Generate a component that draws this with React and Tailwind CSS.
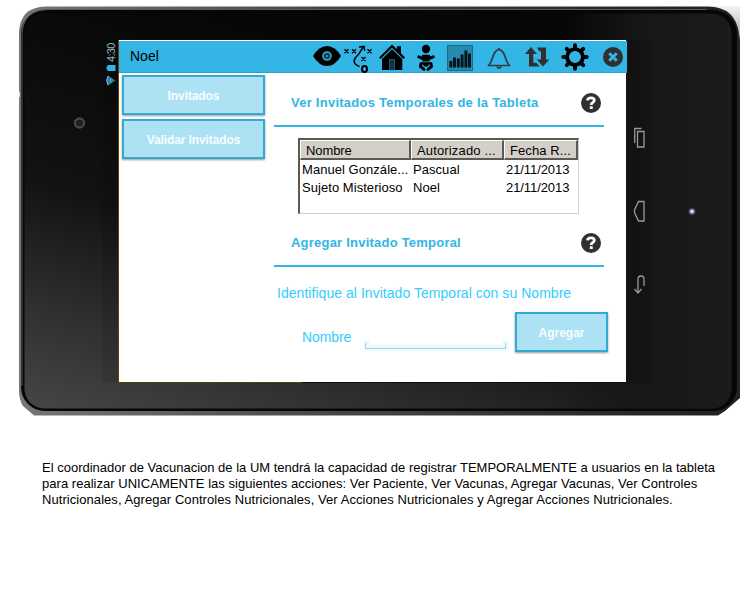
import React from "react";

const INK = "#303030";

function Frame() {
  return (
    <svg className="absolute inset-0" width="721" height="411" viewBox="19 6 721 411">
      <defs>
        <linearGradient id="face" x1="0" y1="1" x2="0.5" y2="0.1">
          <stop offset="0" stopColor="#464646" />
          <stop offset="0.22" stopColor="#303030" />
          <stop offset="0.5" stopColor="#121212" />
          <stop offset="1" stopColor="#060606" />
        </linearGradient>
        <linearGradient id="right" x1="0" x2="1" y1="0" y2="0">
          <stop offset="0" stopColor="#171717" stopOpacity="0" />
          <stop offset="0.5" stopColor="#171717" />
          <stop offset="1" stopColor="#1b1b1b" />
        </linearGradient>
        <linearGradient id="rim" x1="0" x2="1" y1="0" y2="0">
          <stop offset="0" stopColor="#777" />
          <stop offset="0.4" stopColor="#4a4a4a" />
          <stop offset="0.8" stopColor="#2b2b2b" />
          <stop offset="1" stopColor="#222" />
        </linearGradient>
        <linearGradient id="corner" x1="0" x2="0" y1="0" y2="1">
          <stop offset="0" stopColor="#f2f2f2" />
          <stop offset="1" stopColor="#aaa" />
        </linearGradient>
        <radialGradient id="glow">
          <stop offset="0" stopColor="#fff" />
          <stop offset="0.3" stopColor="#b9b9d0" />
          <stop offset="0.6" stopColor="#3c3c50" />
          <stop offset="1" stopColor="#17171a" stopOpacity="0" />
        </radialGradient>
      </defs>
      <path d="M708 6H740V40Z" fill="url(#corner)" />
      <path d="M19 34Q19 7 46 6.500H708Q736 7 739 34L740 40V398L725 411L718 415.500H34L23 406Q19 400 19 390Z" fill="url(#rim)" />
      <rect x="21" y="10" width="716" height="401" rx="24" fill="#060606" />
      <rect x="24.500" y="13.500" width="707" height="395" rx="20" fill="url(#face)" />
      <rect x="560" y="13.500" width="171.500" height="395" rx="20" fill="url(#right)" />
      <path d="M22 386V36Q22 10 48 9.500H706" fill="none" stroke="#5b5b5b" strokeWidth="1" />
      <rect x="627" y="40" width="26" height="343" fill="#0f0f0f" opacity=".35" />
      <rect x="102" y="40" width="17" height="342" fill="#000" opacity=".08" />
      <rect x="118" y="40" width="1" height="342" fill="#6b4300" />
      <path d="M118 382.500H302" stroke="#4b4100" />
      <path d="M302 382.500H627" stroke="#071307" />
      <circle cx="79.500" cy="123" r="4.500" fill="#17171c" stroke="#48464a" strokeWidth="2.400" />
      <circle cx="79.500" cy="123" r="2" fill="#222238" />
      <rect x="19" y="92" width="1" height="5" fill="#ddd" />
      <circle cx="692" cy="211.500" r="5" fill="url(#glow)" />
    </svg>
  );
}

function Icon({ x, w, children }) {
  return (
    <svg className="block shrink-0" width={w} height="32" viewBox={`${x} 41 ${w} 32`}>
      {children}
    </svg>
  );
}

function HeaderIcons() {
  return (
    <div className="flex">
      <Icon x={312} w={31}>
        <path d="M313 56Q319 46 327 46T341 56Q335 66 327 66T313 56Z" fill="#000" />
        <circle cx="327" cy="56" r="3.900" fill="#0d2b37" stroke="#33a5d0" strokeWidth="1.800" />
        <circle cx="327" cy="56" r="1.500" fill="#2784a8" />
      </Icon>
      <Icon x={343} w={32}>
        <g stroke="#000" fill="none" strokeWidth="1.300">
          <path d="M344.500 49.300l4 4m0-4l-4 4M352 49.300l4 4m0-4l-4 4M367.500 49.300l4 4m0-4l-4 4M361.500 57l4 4m0-4l-4 4" />
          <path d="M359.500 66.500C353 64 353 60 356.500 56.500C359.500 54 361 50 363.500 46.500M359 47l5-.7.7 4.500" strokeWidth="1.500" />
          <ellipse cx="364.500" cy="69" rx="2.500" ry="2.900" strokeWidth="2" />
        </g>
      </Icon>
      <Icon x={375} w={36}>
        <path d="M379 57.500L392 44.500L397 49.300V46.200H401V53.300L405 57.500L403.500 59L392 47.800L380.500 59Z" fill="#000" />
        <path d="M382 59L392 49.200L402.300 59V70H382Z" fill="#000" />
        <rect x="389.500" y="59.500" width="5" height="10.500" fill="#12323f" stroke="#246f8c" strokeWidth=".7" />
      </Icon>
      <Icon x={411} w={30}>
        <circle cx="426" cy="49" r="4.200" fill="#000" />
        <path d="M418.800 56.800L422.500 58.300M433.200 56.800L429.500 58.300" stroke="#000" strokeWidth="3" strokeLinecap="round" />
        <path d="M422 55Q426 54 430 55L429.500 61.500H422.500Z" fill="#000" />
        <path d="M421 62.300H431L427.500 66.500H424.500Z" fill="#000" />
        <path d="M421 63.800L420.500 66.500L424 69.300M431 63.800L431.500 66.500L428 69.300" stroke="#000" strokeWidth="3" strokeLinecap="round" strokeLinejoin="round" fill="none" />
      </Icon>
      <Icon x={441} w={39}>
        <rect x="447.500" y="45.500" width="25" height="25" fill="#2789ae" stroke="#226b88" />
        <path d="M450.900 67.500V61M454.500 67.500V57.500M458.300 67.500V58.500M462.100 67.500V54.500M465.900 67.500V50.500M469.500 67.500V53.500" stroke="#03131a" strokeWidth="2.900" />
      </Icon>
      <Icon x={480} w={38}>
        <path d="M488.500 65.500C493.500 61.500 492 50.500 499 49.500C506 50.500 504.500 61.500 509.500 65.500Z" fill="none" stroke="#303c42" strokeWidth="1.700" strokeLinejoin="round" />
        <path d="M499 49.500V48M496.800 66.500Q499 69.500 501.200 66.500" stroke="#303c42" strokeWidth="1.800" fill="none" />
      </Icon>
      <Icon x={518} w={38}>
        <path d="M525 54L531 47L537 54H533.300V62.700H536.500L539.500 66.500H529V54ZM537 47.500H546V59.500H549.300L543 66.500L536.800 59.500H541V51.300H539.300Z" fill={INK} />
      </Icon>
      <Icon x={556} w={40}>
        <circle cx="575" cy="57" r="7.900" fill="none" stroke="#000" strokeWidth="3.800" />
        <path
          d="M575 45.300V49M575 65V68.700M563.300 57H567M583 57H586.700M566.800 48.800L569.300 51.300M580.700 62.700L583.200 65.200M566.800 65.200L569.300 62.700M580.700 51.300L583.200 48.800"
          stroke="#000"
          strokeWidth="4"
          strokeLinecap="round"
        />
      </Icon>
      <Icon x={596} w={31}>
        <circle cx="613" cy="57" r="10" fill={INK} />
        <path d="M609.300 53.300l7.400 7.400m0-7.400l-7.400 7.400" stroke="#33b5e5" strokeWidth="3" />
      </Icon>
    </div>
  );
}

function Button({ className, children }) {
  return (
    <button
      className={`flex items-center justify-center border-2 border-[#34a9d3] bg-[#ade1f4] pt-[2px] text-[12px] font-bold text-[#f8fdff] shadow-[0_1px_2px_#999] ${className}`}
    >
      {children}
    </button>
  );
}

function Section({ children, tracking }) {
  return (
    <div className="flex h-[47px] w-[330px] items-center justify-between border-b-2 border-[#33b5e5] pl-[17px] pr-[3px] text-[13px] font-bold text-[#33b5e5]">
      <span className={`pt-px ${tracking}`}>{children}</span>
      <span className="flex h-5 w-5 items-center justify-center rounded-full bg-[#303030]">
        <svg width="12" height="14" viewBox="0 0 12 14">
          <path d="M2.500 4.300Q2.800 1.800 6 1.800Q9.300 1.800 9.300 4.200Q9.300 5.800 7.500 6.700Q6.200 7.400 6.200 9" fill="none" stroke="#fff" strokeWidth="2.800" />
          <rect x="4.800" y="10.300" width="2.900" height="2.700" fill="#fff" />
        </svg>
      </span>
    </div>
  );
}

function Head({ className, children }) {
  return (
    <div className={`h-5 whitespace-nowrap border-b-2 border-r-2 border-[#5c5a57] border-l border-t border-l-white border-t-white bg-[#d4d0c8] pl-[5px] leading-[19px] ${className}`}>
      {children}
    </div>
  );
}

const rows = [
  ["Manuel Gonzále...", "Pascual", "21/11/2013"],
  ["Sujeto Misterioso", "Noel", "21/11/2013"],
];

function GuestTable() {
  return (
    <div className="ml-6 h-[76px] w-[281px] border-b border-l-2 border-r border-t-2 border-b-[#d4d0c8] border-l-[#5c5a57] border-r-[#d4d0c8] border-t-[#5c5a57] text-[13px] text-black">
      <div className="flex">
        <Head className="w-[111px] tracking-[-.1px]">Nombre</Head>
        <Head className="w-[93px] tracking-[.15px]">Autorizado ...</Head>
        <Head className="w-[74px] tracking-[.1px]">Fecha R...</Head>
      </div>
      {rows.map((r) => (
        <div key={r[0]} className="flex h-[18px] whitespace-nowrap pl-[2px] leading-[19px]">
          <span className="w-[111px] tracking-[.05px]">{r[0]}</span>
          <span className="w-[93px] tracking-[.05px]">{r[1]}</span>
          <span className="tracking-[-.08px]">{r[2]}</span>
        </div>
      ))}
    </div>
  );
}

function Screen() {
  return (
    <main className="relative mt-[34px] h-[342px] w-[507px] shrink-0 bg-white">
      <header className="mt-px flex h-8 w-[508px] items-center justify-between border-b border-[#3a9cc0] bg-[#33b5e5] pl-[11px]">
        <span className="text-[14px] text-black">Noel</span>
        <HeaderIcons />
      </header>
      <div className="flex">
        <nav className="flex w-[155px] flex-col gap-1 pl-[3px] pt-[2px]">
          <Button className="h-10 w-[143px] tracking-[-.1px]">Invitados</Button>
          <Button className="h-10 w-[143px] tracking-[-.1px]">Validar Invitados</Button>
        </nav>
        <section className="flex flex-col pt-[7px]">
          <Section tracking="tracking-[.25px]">Ver Invitados Temporales de la Tableta</Section>
          <div className="h-[11px]" />
          <GuestTable />
          <div className="h-[6px]" />
          <Section tracking="tracking-[.22px]">Agregar Invitado Temporal</Section>
          <p className="ml-[3px] mt-[17px] whitespace-nowrap text-[14px] leading-[18px] tracking-[.04px] text-[#33ccff]">
            Identifique al Invitado Temporal con su Nombre
          </p>
          <div className="mt-[10px] flex">
            <label className="ml-7 w-[62px] pt-[16px] text-[14px] leading-[18px] tracking-[-.1px] text-[#33ccff]">Nombre</label>
            <svg className="mt-[27px]" width="146" height="14" viewBox="0 0 146 14">
              <path d="M2.500 4V8.500H141.500V4" fill="none" stroke="#edf8fc" strokeWidth="6" strokeLinejoin="round" strokeLinecap="round" />
              <path d="M1.500 4V9.500H141.500V4" fill="none" stroke="#9bd6ea" />
            </svg>
            <Button className="ml-[5px] h-10 w-[93px]">Agregar</Button>
          </div>
        </section>
      </div>
    </main>
  );
}

function StatusBar() {
  return (
    <aside className="relative w-[100px] shrink-0 pl-[86px] pt-[36px]">
      <span className="block h-5 w-3 rotate-180 whitespace-nowrap text-[11px] leading-[12px] tracking-[-.7px] text-[#8fb5c0] [writing-mode:vertical-rl]">
        4:30
      </span>
      <svg className="mt-[2px] block" width="12" height="24" viewBox="105 64 12 24">
        <path d="M107.500 65h8v6h-8zM106.500 66.500h1v3h-1z" fill="#33b5e5" />
        <path d="M115.500 80.500L108 75.500Q105 80.500 108 85.500Z" fill="#237a9a" />
        <path d="M108 76Q105.500 80.500 108 85M111 78.500Q109.500 80.500 111 82.500" stroke="#70cce9" fill="none" />
      </svg>
    </aside>
  );
}

function NavKeys() {
  return (
    <aside className="relative pl-[7px] pt-[118px]">
      <svg className="block" width="14" height="174" viewBox="633 124 14 174" fill="none" stroke="#9a9a9a" strokeWidth="1.300">
        <path d="M637.500 131.500h6.500v15.500h-6.500zM634.700 143V128.500h6.800" />
        <path d="M644 201.500V221H638.500L634.500 212.500V210L638.500 201.500Z" />
        <path d="M644 286V279.500Q644 276 641 276Q638 276 638 279.500V293M634.500 289L638 293L641.500 289" />
      </svg>
    </aside>
  );
}

export default function App() {
  return (
    <div className="h-[600px] w-[756px] overflow-hidden bg-white pl-[19px] pt-[6px] font-['Liberation_Sans',Arial,sans-serif]">
      <div className="relative flex h-[411px] w-[721px]">
        <Frame />
        <StatusBar />
        <Screen />
        <NavKeys />
      </div>
      <div className="ml-[23px] mt-[43px] whitespace-nowrap text-[13px] leading-4 text-black">
        <p>El coordinador de Vacunacion de la UM tendrá la capacidad de registrar TEMPORALMENTE a usuarios en la tableta</p>
        <p className="tracking-[.03px]">para realizar UNICAMENTE las siguientes acciones: Ver Paciente, Ver Vacunas, Agregar Vacunas, Ver Controles</p>
        <p className="tracking-[.06px]">Nutricionales, Agregar Controles Nutricionales, Ver Acciones Nutricionales y Agregar Acciones Nutricionales.</p>
      </div>
    </div>
  );
}
